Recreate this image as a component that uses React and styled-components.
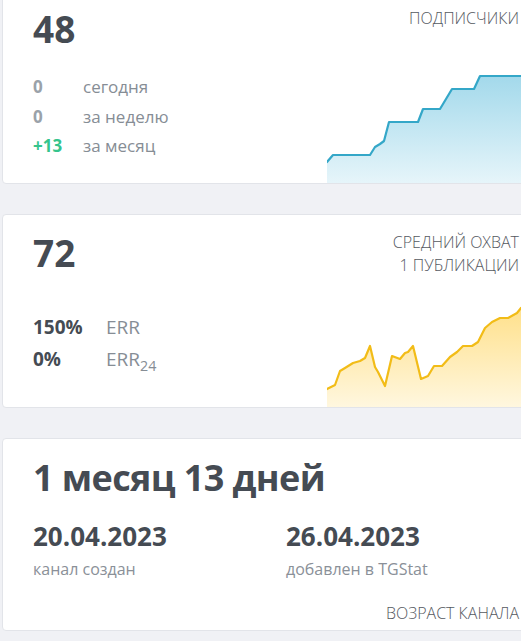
import styled, { createGlobalStyle } from 'styled-components';

const GlobalStyle = createGlobalStyle`
  html, body {
    margin: 0;
    padding: 0;
    background: #f0f1f5;
    overflow: hidden;
    font-family: 'Open Sans', 'Noto Sans', sans-serif;
  }
`;

// данные графиков в координатах области 204x110
const subscribersLine = [
  [0, 89], [6, 82], [43, 82], [48, 74], [53, 71], [57, 68], [62, 49], [91, 49],
  [96, 36], [113, 36], [125, 16], [147, 16], [153, 3], [204, 3],
];

const reachLine = [
  [0, 92], [8, 88], [13, 74], [18, 71], [26, 66], [33, 64], [38, 61], [43, 49],
  [48, 70], [51, 75], [58, 89], [65, 59], [73, 62], [78, 56], [81, 55], [86, 49],
  [94, 82], [101, 79], [107, 69], [115, 69], [123, 60], [130, 55], [136, 49],
  [145, 49], [151, 45], [158, 31], [165, 25], [173, 21], [181, 21], [190, 16],
  [194, 11], [204, 5],
];

const Page = styled.div`
  width: 530px;
  margin-top: -10px;
  padding-left: 2px;
  display: flex;
  flex-direction: column;
  gap: 30px;
`;

const Card = styled.div`
  box-sizing: border-box;
  height: ${(p) => p.$height || 194}px;
  background: #fff;
  border: 1px solid #e2e4e9;
  border-radius: 4px;
  display: grid;
  grid-template-columns: 1fr 204px;
  overflow: hidden;
`;

const Left = styled.div`
  padding: 16px 0 0 30px;
`;

const Right = styled.div`
  display: flex;
  flex-direction: column;
  align-items: flex-end;
`;

const Title = styled.div`
  padding: 16px 12px 0 0;
  font-size: 16px;
  font-weight: 300;
  line-height: 23px;
  color: #55595f;
  text-align: right;
  white-space: nowrap;
`;

const BigValue = styled.div`
  font-size: ${(p) => p.$size || 37}px;
  letter-spacing: ${(p) => p.$tracking || 0}px;
  font-weight: 700;
  line-height: 44px;
  color: #454b53;
`;

const Rows = styled.div`
  margin-top: ${(p) => p.$gap}px;
  display: grid;
  grid-template-columns: ${(p) => p.$col}px 1fr;
  font-size: ${(p) => p.$size}px;
  line-height: ${(p) => p.$line}px;
`;

const Num = styled.div`
  font-weight: 700;
  color: ${(p) => (p.$tone === 'up' ? '#35c48c' : p.$tone === 'dark' ? '#454b53' : '#9aa2a9')};
`;

const Label = styled.div`
  color: #868d95;
  sub {
    font-size: 0.75em;
    vertical-align: -0.35em;
    line-height: 0;
  }
`;

const ChartSvg = styled.svg`
  display: block;
  margin-top: auto;
  width: 204px;
  height: 110px;
`;

const AgeCard = styled(Card)`
  display: flex;
  flex-direction: column;
  padding: 17px 12px 0 30px;
`;

const Dates = styled.div`
  margin-top: 19px;
  display: grid;
  grid-template-columns: 253px 1fr;
`;

const DateValue = styled.div`
  font-size: 26px;
  font-weight: 700;
  line-height: 34px;
  color: #454b53;
`;

const DateLabel = styled.div`
  margin-top: 3px;
  font-size: 16px;
  line-height: 26px;
  color: #8a9098;
`;

const FooterTitle = styled(Title)`
  padding: 0;
  margin-top: auto;
  margin-bottom: 5px;
`;

const Chart = ({ points, line, top, bottom, id }) => {
  const pts = points.map((p) => p.join(',')).join(' ');
  const area = `M0,110 L${points.map((p) => p.join(',')).join(' L')} L204,110 Z`;
  return (
    <ChartSvg viewBox='0 0 204 110' preserveAspectRatio='none'>
      <defs>
        <linearGradient id={id} x1='0' y1='0' x2='0' y2='1'>
          <stop offset='0%' stopColor={top} />
          <stop offset='100%' stopColor={bottom} />
        </linearGradient>
      </defs>
      <path d={area} fill={`url(#${id})`} />
      <polyline
        points={pts}
        fill='none'
        stroke={line}
        strokeWidth='2.2'
        strokeLinejoin='round'
        strokeLinecap='round'
      />
    </ChartSvg>
  );
};

const App = () => {
  return (
    <>
      <GlobalStyle />
      <Page>
        <Card>
          <Left>
            <BigValue>48</BigValue>
            <Rows $gap={21} $col={50} $size={17} $line={29.5}>
              <Num>0</Num>
              <Label>сегодня</Label>
              <Num>0</Num>
              <Label>за неделю</Label>
              <Num $tone='up'>+13</Num>
              <Label>за месяц</Label>
            </Rows>
          </Left>
          <Right>
            <Title>ПОДПИСЧИКИ</Title>
            <Chart points={subscribersLine} line='#34a7c8' top='#a3d9eb' bottom='#e6f5fa' id='subs' />
          </Right>
        </Card>

        <Card>
          <Left>
            <BigValue>72</BigValue>
            <Rows $gap={36} $col={73} $size={19} $line={32}>
              <Num $tone='dark'>150%</Num>
              <Label>ERR</Label>
              <Num $tone='dark'>0%</Num>
              <Label>
                ERR<sub>24</sub>
              </Label>
            </Rows>
          </Left>
          <Right>
            <Title>
              СРЕДНИЙ ОХВАТ
              <br />1 ПУБЛИКАЦИИ
            </Title>
            <Chart points={reachLine} line='#f2bc17' top='#ffdf86' bottom='#fff7df' id='reach' />
          </Right>
        </Card>

        <AgeCard $height={193}>
          <BigValue $size={36} $tracking={-0.6}>1 месяц 13 дней</BigValue>
          <Dates>
            <div>
              <DateValue>20.04.2023</DateValue>
              <DateLabel>канал создан</DateLabel>
            </div>
            <div>
              <DateValue>26.04.2023</DateValue>
              <DateLabel>добавлен в TGStat</DateLabel>
            </div>
          </Dates>
          <FooterTitle>ВОЗРАСТ КАНАЛА</FooterTitle>
        </AgeCard>
      </Page>
    </>
  );
};

export default App;
